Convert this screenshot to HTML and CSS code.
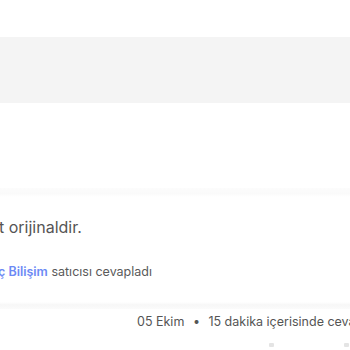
FILE: index.html
```html
<!DOCTYPE html>
<html lang="tr">
<head>
<meta charset="utf-8">
<link rel="stylesheet" href="styles.css">
</head>
<body>
<div class="page">
  <div class="top-space"></div>
  <div class="band"></div>
  <div class="gap"></div>
  <div class="sep"></div>
  <p class="answer">t orijinaldir.</p>
  <p class="seller"><span class="name">ç Bilişim</span> satıcısı cevapladı</p>
  <div class="sep sep2"></div>
  <p class="meta">05 Ekim <span class="dot">•</span> 15 dakika içerisinde cevaplandı</p>
  <div class="actions">
    <span class="act act1"></span>
    <span class="act act2"></span>
  </div>
</div>
</body>
</html>
```
FILE: styles.css
```css
html, body {
  margin: 0;
  padding: 0;
  background: #ffffff;
  overflow: hidden;
}
.page {
  width: 350px;
  height: 350px;
  font-family: Inter, "Noto Sans", sans-serif;
  overflow: hidden;
}
.top-space { height: 37px; }
.band {
  height: 66px;
  background: #f4f4f4;
}
.gap { height: 85px; }
.sep {
  height: 9px;
  background: linear-gradient(#fcfcfc, #fafafa 60%, #ffffff);
}
.answer {
  margin: 19px 0 0 -1px;
  font-size: 16px;
  line-height: 22px;
  color: #555555;
  white-space: nowrap;
}
.seller {
  margin: 26px 0 0 -2px;
  font-size: 12.5px;
  line-height: 16px;
  color: #5a5a5a;
  white-space: nowrap;
}
.name {
  color: #6c8af5;
  font-weight: 600;
}
.sep2 {
  margin-top: 22px;
  height: 7px;
  background: linear-gradient(#ffffff, #f7f7f7 40%, #fbfbfb);
}
.meta {
  margin: 5px 0 0 137px;
  font-size: 12.5px;
  line-height: 16px;
  color: #555555;
  white-space: nowrap;
}
.dot { margin: 0 5px; }
.actions {
  display: flex;
  margin: 13px 0 0 269px;
  gap: 70px;
}
.act {
  width: 5px;
  height: 4px;
  background: #e4e4e4;
  border-radius: 1px;
}
```
